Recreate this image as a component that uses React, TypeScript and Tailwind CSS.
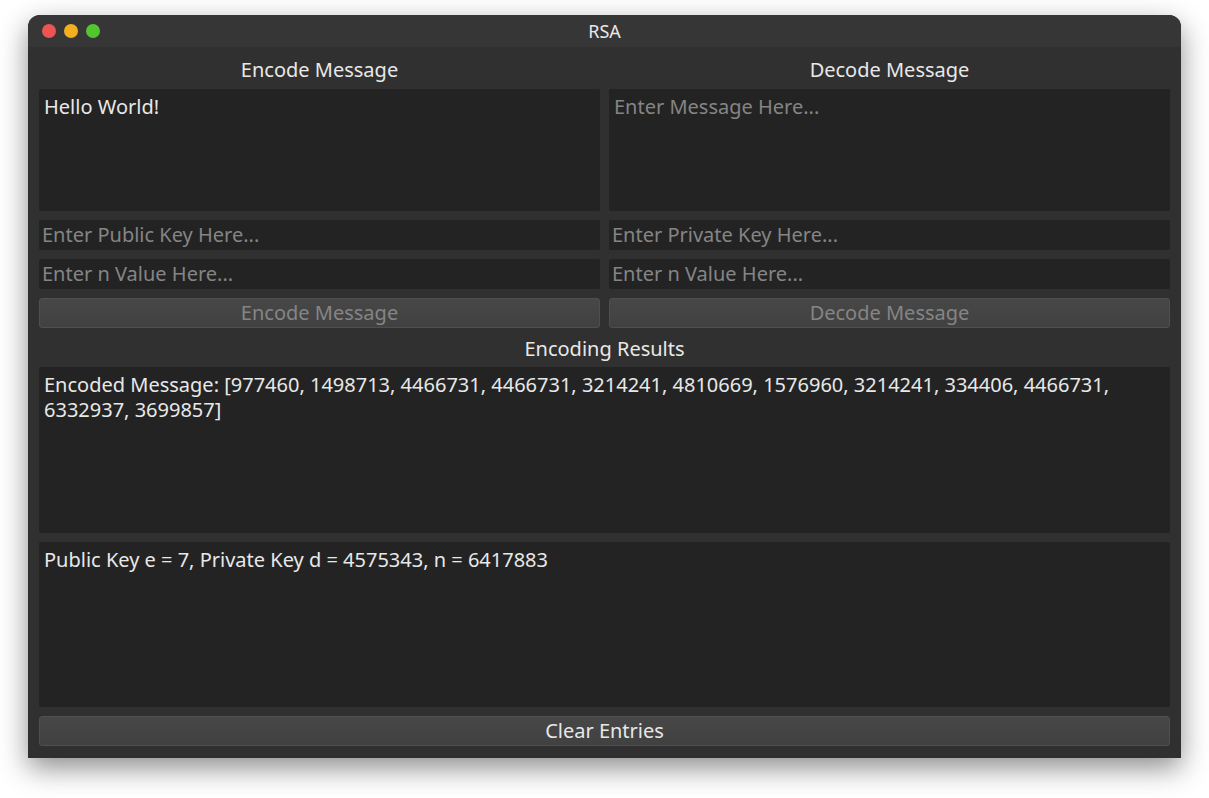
const font = { fontFamily: '"Noto Sans", "Open Sans", sans-serif' };

function Field({ text, placeholder }: { text?: string; placeholder?: string }) {
  return (
    <div className="h-[30px] bg-[#232323] rounded-[2px] flex items-center px-[3px] text-[20px] leading-none">
      {text ? (
        <span className="text-[#e8e8e8]">{text}</span>
      ) : (
        <span className="text-[#858585]">{placeholder}</span>
      )}
    </div>
  );
}

function Button({ label, enabled }: { label: string; enabled?: boolean }) {
  return (
    <div
      className={
        "h-[30px] rounded-[3px] border border-[#4f4f4f] bg-gradient-to-b from-[#474747] to-[#414141] flex items-center justify-center text-[20px] leading-none " +
        (enabled ? "text-[#e8e8e8]" : "text-[#858585]")
      }
    >
      {label}
    </div>
  );
}

function Area({ h, text, placeholder }: { h: string; text?: string; placeholder?: string }) {
  return (
    <div className={"bg-[#232323] rounded-[2px] px-[5px] pt-[5px] text-[20px] leading-[25px] " + h}>
      {text ? (
        <span className="text-[#e8e8e8]">{text}</span>
      ) : (
        <span className="text-[#858585]">{placeholder}</span>
      )}
    </div>
  );
}

export default function App() {
  return (
    <div className="w-[1209px] h-[798px] bg-white relative" style={font}>
      <div className="absolute left-[28px] top-[15px] w-[1153px] h-[743px] rounded-t-[12px] bg-[#303030] shadow-[0_10px_28px_rgba(0,0,0,0.45)] overflow-hidden flex flex-col">
        {/* title bar */}
        <div className="h-[32px] bg-[#363636] flex items-center relative shrink-0">
          <div className="flex gap-[8px] pl-[14px]">
            <span className="w-[14px] h-[14px] rounded-full bg-[#ee5451]" />
            <span className="w-[14px] h-[14px] rounded-full bg-[#f2b01e]" />
            <span className="w-[14px] h-[14px] rounded-full bg-[#52c52f]" />
          </div>
          <div className="absolute inset-0 flex items-center justify-center text-[18px] text-[#e8e8e8]">
            RSA
          </div>
        </div>

        <div className="flex flex-col px-[11px] flex-1">
          <div className="grid grid-cols-2 gap-x-[9px]">
            <div className="flex flex-col">
              <div className="h-[42px] flex items-center justify-center text-[20px] text-[#e8e8e8] pt-[4px]">
                Encode Message
              </div>
              <Area h="h-[122px]" text="Hello World!" />
              <div className="mt-[9px] flex flex-col gap-[9px]">
                <Field placeholder="Enter Public Key Here..." />
                <Field placeholder="Enter n Value Here..." />
              </div>
              <div className="mt-[9px]">
                <Button label="Encode Message" />
              </div>
            </div>
            <div className="flex flex-col">
              <div className="h-[42px] flex items-center justify-center text-[20px] text-[#e8e8e8] pt-[4px]">
                Decode Message
              </div>
              <Area h="h-[122px]" placeholder="Enter Message Here..." />
              <div className="mt-[9px] flex flex-col gap-[9px]">
                <Field placeholder="Enter Private Key Here..." />
                <Field placeholder="Enter n Value Here..." />
              </div>
              <div className="mt-[9px]">
                <Button label="Decode Message" />
              </div>
            </div>
          </div>

          <div className="h-[39px] flex items-center justify-center text-[20px] text-[#e8e8e8] pt-[3px]">
            Encoding Results
          </div>
          <Area
            h="h-[166px]"
            text="Encoded Message: [977460, 1498713, 4466731, 4466731, 3214241, 4810669, 1576960, 3214241, 334406, 4466731, 6332937, 3699857]"
          />
          <div className="mt-[9px]">
            <Area h="h-[165px]" text="Public Key e = 7, Private Key d = 4575343, n = 6417883" />
          </div>
          <div className="mt-[9px]">
            <Button label="Clear Entries" enabled />
          </div>
        </div>
      </div>
    </div>
  );
}
